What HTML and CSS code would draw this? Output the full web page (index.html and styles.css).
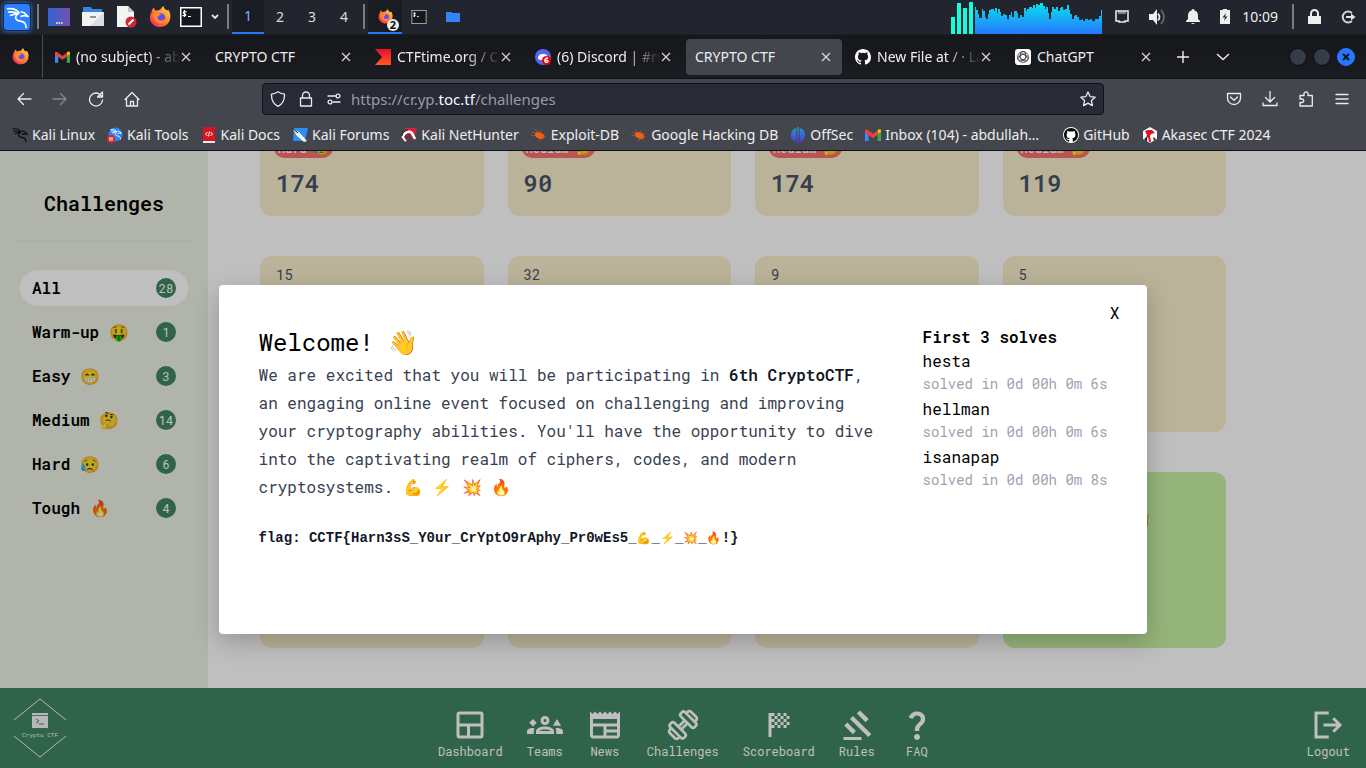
FILE: index.html
```html
<!DOCTYPE html>
<html lang="en">
<head>
<meta charset="utf-8">
<meta name="viewport" content="width=device-width, initial-scale=1">
<title>CRYPTO CTF</title>
<link rel="stylesheet" href="styles.css">
</head>
<body>
<svg class="defs" aria-hidden="true">
  <defs>
    <linearGradient id="ff-g" x1="1" y1="0" x2="0" y2="1"><stop offset="0" stop-color="#ffe14a"/><stop offset=".45" stop-color="#ff8a2a"/><stop offset=".8" stop-color="#ff3b4e"/><stop offset="1" stop-color="#d81b78"/></linearGradient>
    <linearGradient id="desk-g" x1="0" y1="0" x2="1" y2="0"><stop offset="0" stop-color="#3465d0"/><stop offset="1" stop-color="#7350b0"/></linearGradient>
    <linearGradient id="cpu-g" x1="0" y1="0" x2="0" y2="1"><stop offset="0" stop-color="#07e3ec"/><stop offset="1" stop-color="#2777ff"/></linearGradient>
    <linearGradient id="ctf-g" x1="0" y1="0" x2="0" y2="1"><stop offset="0" stop-color="#e8102c"/><stop offset="1" stop-color="#ff5a26"/></linearGradient>
    <linearGradient id="off-g" x1="0" y1="0" x2="0" y2="1"><stop offset="0" stop-color="#18a0c4"/><stop offset="1" stop-color="#5b2fe0"/></linearGradient>
    <symbol id="dragon" viewBox="0 0 24 24"><path d="M1 3c6-1 11 1 13 5M2 6.500c4-1 8 0 11 1.500M4 10c3-1 6-2 10-2M13 8c-6 4-2 7.500 3 8 4 .5 5 3 5 7M15 6l4 1 4 4-4-1-4 1" fill="none" stroke="currentColor" stroke-width="1.700" stroke-linejoin="round"/></symbol>
    <symbol id="firefox" viewBox="0 0 24 24"><path d="M3 6c0-1 1-3 2-4l2 3c2 0 4-1 5-1 1 0 1-2 4-4 0 3 2 4 4 5l1-1c2 3 3 6 2 10-1 6-6 9-11 9S1 19 1 13c0-3 1-5 2-7z" fill="url(#ff-g)"/><circle cx="12.500" cy="13" r="5.200" fill="#6a4de8"/><path d="M4 9c3-2 6-2 9 0l-3 2c-2 2 0 5 3 5 2 0 4-1 5-3 0 4-3 6-6 6-5 0-8-5-8-10z" fill="#ff8c2e"/></symbol>
    <symbol id="term" viewBox="0 0 22 20"><rect x=".75" y=".75" width="20.500" height="18.500" fill="#16171a" stroke="currentColor" stroke-width="1.500"/><path d="M6.500 5c-3-1.500-4 1-2 1.700 2.500 1 1 3-2 1.600M4.500 3v7M8 9.500h3" fill="none" stroke="#fff" stroke-width="1.200"/></symbol>
    <symbol id="folder" viewBox="0 0 16 12"><path d="M1 1h5l1.500 1H15v9H1z" fill="#3584f5"/></symbol>
    <symbol id="gmail" viewBox="0 0 16 12"><path d="M0 2v10h3.500V5z" fill="#4285f4"/><path d="M16 2v10h-3.500V5z" fill="#34a853"/><path d="M12.500 1.500V5L16 3V1.500c0-1.500-2-2-3.500 0z" fill="#fbbc04"/><path d="M0 1.500V3l3.500 3L8 9l4.500-3V1.500L8 5 3.500 1.500C2 0 0 .2 0 1.500z" fill="#ea4335"/></symbol>
    <symbol id="github" viewBox="0 0 16 16"><path fill="currentColor" d="M8 0C3.580 0 0 3.580 0 8c0 3.540 2.290 6.530 5.470 7.590.4.070.55-.17.55-.38 0-.19-.01-.82-.01-1.490-2.010.37-2.530-.49-2.690-.94-.09-.23-.48-.94-.82-1.130-.28-.15-.68-.52-.01-.53.63-.01 1.080.58 1.230.82.72 1.210 1.870.87 2.330.66.07-.52.28-.87.51-1.070-1.780-.2-3.640-.89-3.640-3.950 0-.87.31-1.590.82-2.150-.08-.2-.36-1.020.08-2.120 0 0 .67-.21 2.200.82a7.600 7.600 0 0 1 4 0c1.530-1.040 2.200-.82 2.200-.82.44 1.100.16 1.920.08 2.120.51.56.82 1.270.82 2.150 0 3.070-1.870 3.750-3.650 3.950.29.25.54.73.54 1.480 0 1.070-.01 1.930-.01 2.200 0 .21.15.46.55.38A8 8 0 0 0 16 8c0-4.420-3.580-8-8-8z"/></symbol>
    <symbol id="close" viewBox="0 0 10 10"><path d="M1 1l8 8M9 1L1 9" fill="none" stroke="#d8d8dc" stroke-width="1.200"/></symbol>
    <symbol id="bug" viewBox="0 0 16 12"><ellipse cx="8.500" cy="6.500" rx="4.800" ry="3" transform="rotate(25 8.500 6.500)" fill="#f06016"/><path d="M1 3l4 1M0 6l5 1M4 0l3 4M8 12l1-3M12 11l-1-3M15 8l-4-1M14 5l-4 0M9 1l1 4" stroke="#c9561f" stroke-width=".7"/></symbol>
  </defs>
</svg>

<header class="panel">
  <svg class="kali-logo" viewBox="0 0 28 28"><rect x="1" y="1" width="26" height="26" rx="3" fill="#2a7fff"/><use class="white" href="#dragon" x="3" y="3" width="23" height="23"/></svg>
  <i class="sep sep-first"></i>
  <div class="launchers">
    <svg width="22" height="18" viewBox="0 0 22 18"><rect width="22" height="18" fill="url(#desk-g)"/><path d="M8 15h1.500M10.500 15H12M13 15h1.500" stroke="#fff" stroke-width="1.500"/></svg>
    <svg width="22" height="20" viewBox="0 0 22 20"><path d="M1 0h8l1 2h10v4H1z" fill="#3584e4"/><path d="M0 5h22v14H0z" fill="#f2f2f4"/><path d="M8 19L22 5v14z" fill="#dcdce0"/><path d="M8 10h6" stroke="#777" stroke-width="1.500"/></svg>
    <svg width="21" height="22" viewBox="0 0 21 22"><path d="M1 0h11l6 6v15H1z" fill="#f4f4f4"/><path d="M12 0l6 6h-6z" fill="#c4c4c4"/><circle cx="15" cy="16" r="5.500" fill="#d4262f"/><path d="M12.500 18.500l5-5" stroke="#fff" stroke-width="2"/></svg>
    <svg width="22" height="22"><use href="#firefox"/></svg>
    <svg class="white" width="22" height="20"><use href="#term"/></svg>
    <svg width="8" height="6" viewBox="0 0 8 6"><path d="M1 1l3 3 3-3" fill="none" stroke="#e6e6e6" stroke-width="1.800"/></svg>
  </div>
  <i class="sep"></i>
  <nav class="spaces" aria-label="Workspaces">
    <button class="space on" type="button">1</button><button class="space" type="button">2</button><button class="space" type="button">3</button><button class="space" type="button">4</button>
  </nav>
  <i class="sep"></i>
  <div class="tasks">
    <button class="task on" type="button" aria-label="Firefox"><svg width="15" height="15"><use href="#firefox"/></svg><b class="count">2</b></button>
    <button class="task" type="button" aria-label="Terminal"><svg class="grey" width="16" height="14"><use href="#term"/></svg></button>
    <button class="task" type="button" aria-label="Files"><svg width="16" height="12"><use href="#folder"/></svg></button>
  </div>
  <div class="tray">
    <svg class="cpu" width="152" height="34" viewBox="0 0 152 34"><path d="M0 17h4v17H0zM6 3h4v31H6zM12 8h4v26h-4zM18 2h4v32h-4z" fill="#12ffdd"/><path fill="url(#cpu-g)" d="M24 34V7h1v3h2v4h1v4h3v-9h1v2h2v6h1v2h2v-5h1v-4h2v-1h3v2h1v-3h2v5h1v-4h2v3h1v4h2v-2h2v1h2v4h2v-4h2v-3h1v5h2v-6h3v2h1v5h2v-3h2v2h2v-9h2v3h1v-2h2v-2h3v1h1v-3h2v3h1v-4h2v1h2v-2h3v3h2v3h1v-2h2v6h1v6h2v-7h1v-5h2v2h2v-2h2v4h2v-3h1v-1h2v3h2v-1h2v-4h2v5h1v4h2v5h2v-3h1v-1h2v2h2v3h3v-1h1v2h2v-2h3v1h2v-1h2v2h3v-2h4v-3h2V10h1v24z"/></svg>
    <svg width="14" height="13" viewBox="0 0 14 13"><path d="M1 1h12v10h-3v1H4v-1H1z" fill="none" stroke="#e8e8e8" stroke-width="1.600"/><path d="M4 1v3M6 1v3M8 1v3M10 1v3" stroke="#e8e8e8"/></svg>
    <svg width="17" height="16" viewBox="0 0 17 16"><path d="M0 5h4l4-5v16l-4-5H0z" fill="#eee"/><path d="M9 4.500q3 3.500 0 7" fill="none" stroke="#eee" stroke-width="1.700"/><path d="M12 1q6 7 0 14" fill="none" stroke="#666973" stroke-width="1.700"/></svg>
    <svg width="14" height="15" viewBox="0 0 14 15"><path d="M7 0c1 0 1.500 1 1.500 1.500C11 2 12 4 12 7v3l2 2v1H0v-1l2-2V7c0-3 1-5 3.500-5.500C5.500 1 6 0 7 0zM5 14h4q-2 2-4 0z" fill="#eee"/></svg>
    <svg width="10" height="15" viewBox="0 0 10 15"><path d="M3 0h4v1h3v14H0V1h3z" fill="#eee"/><path d="M6 4L2.500 8.500H5L4 12l3.500-4.500H5z" fill="#23252e"/></svg>
    <time class="clock">10:09</time>
    <i class="sep"></i>
    <svg width="13" height="15" viewBox="0 0 13 15"><path d="M3 7V4.500a3.500 3.500 0 0 1 7 0V7" fill="none" stroke="#eee" stroke-width="2"/><path d="M0 7h13v8H0z" fill="#eee"/></svg>
    <svg width="15" height="14" viewBox="0 0 15 14"><path d="M11 3A5.500 5.500 0 1 0 11 11" fill="none" stroke="#d4d4d4" stroke-width="2"/><path d="M5 7h7" stroke="#e4e4e4" stroke-width="2"/><path d="M10 3.500L14.500 7 10 10.500z" fill="#e4e4e4"/></svg>
  </div>
</header>

<div class="tabbar">
  <svg class="ff-home" width="17" height="17"><use href="#firefox"/></svg>
  <div class="tabs">
    <div class="tab"><svg width="15" height="12"><use href="#gmail"/></svg><span class="tab-title long">(no subject) - ab</span><button class="x" type="button" aria-label="Close tab"><svg width="10" height="10"><use href="#close"/></svg></button></div>
    <div class="tab"><span class="tab-title">CRYPTO CTF</span><button class="x" type="button" aria-label="Close tab"><svg width="10" height="10"><use href="#close"/></svg></button></div>
    <div class="tab"><svg width="16" height="16" viewBox="0 0 16 16"><path d="M0 0h16v16H0l7-8z" fill="url(#ctf-g)"/></svg><span class="tab-title long">CTFtime.org / C</span><button class="x" type="button" aria-label="Close tab"><svg width="10" height="10"><use href="#close"/></svg></button></div>
    <div class="tab"><svg width="16" height="16" viewBox="0 0 16 16"><circle cx="8" cy="8" r="8" fill="#5865f2"/><path d="M3 10c0-4 2-5 5-5s5 1 5 5l-3 1H6z" fill="#fff"/><circle cx="11.500" cy="11.500" r="4.500" fill="#e8000b"/><path d="M13 9c-3 0-3.500 2-3 3.500s3 1 3-.3-2-1.300-2.800-.2" fill="none" stroke="#fff" stroke-width="1.300"/></svg><span class="tab-title long">(6) Discord | #ru</span><button class="x" type="button" aria-label="Close tab"><svg width="10" height="10"><use href="#close"/></svg></button></div>
    <div class="tab active"><span class="tab-title">CRYPTO CTF</span><button class="x" type="button" aria-label="Close tab"><svg width="10" height="10"><use href="#close"/></svg></button></div>
    <div class="tab"><svg class="white" width="16" height="16"><use href="#github"/></svg><span class="tab-title long">New File at / · La</span><button class="x" type="button" aria-label="Close tab"><svg width="10" height="10"><use href="#close"/></svg></button></div>
    <div class="tab"><svg width="16" height="16" viewBox="0 0 16 16"><rect width="16" height="16" rx="3" fill="#fff"/><g fill="none" stroke="#333" stroke-width=".8"><rect x="5.400" y="2.400" width="5.200" height="9" rx="2.600"/><rect x="5.400" y="2.400" width="5.200" height="9" rx="2.600" transform="rotate(120 8 8)"/><rect x="5.400" y="2.400" width="5.200" height="9" rx="2.600" transform="rotate(240 8 8)"/><circle cx="8" cy="8" r="5.400"/></g></svg><span class="tab-title">ChatGPT</span><button class="x" type="button" aria-label="Close tab"><svg width="10" height="10"><use href="#close"/></svg></button></div>
  </div>
  <button class="tool" type="button" aria-label="New tab"><svg width="12" height="12" viewBox="0 0 12 12"><path d="M6 0v12M0 6h12" stroke="#eee" stroke-width="1.400"/></svg></button>
  <button class="tool" type="button" aria-label="List all tabs"><svg width="14" height="8" viewBox="0 0 14 8"><path d="M1 1l6 5.500L13 1" fill="none" stroke="#eee" stroke-width="1.400"/></svg></button>
  <div class="wm">
    <button type="button" aria-label="Minimize"></button><button type="button" aria-label="Maximize"></button><button class="wm-close" type="button" aria-label="Close"><svg width="8" height="8" viewBox="0 0 8 8"><path d="M1 1l6 6M7 1L1 7" stroke="#10131a" stroke-width="2"/></svg></button>
  </div>
</div>

<div class="toolbar">
  <div class="nav-buttons">
    <button type="button" aria-label="Back"><svg viewBox="0 0 16 16"><path d="M15 8H2M7.500 2.500L2 8l5.500 5.500"/></svg></button>
    <button type="button" aria-label="Forward" disabled><svg viewBox="0 0 16 16"><path d="M1 8h13M8.500 2.500L14 8l-5.500 5.500"/></svg></button>
    <button type="button" aria-label="Reload"><svg viewBox="0 0 16 16"><path d="M13.500 5A6.500 6.500 0 1 0 14.500 9M14.500 1v5h-5z"/></svg></button>
    <button type="button" aria-label="Home"><svg viewBox="0 0 16 16"><path d="M1 8.500L8 1.500l7 7M2.500 7.500V15h11V7.500M6.500 15v-4.500h3V15"/></svg></button>
  </div>
  <div class="urlbar">
    <svg viewBox="0 0 16 16"><path d="M8 .8c2 1.500 4 2 6.500 2.300C14.700 8 13 13 8 15.300 3 13 1.300 8 1.500 3.100 4 2.800 6 2.300 8 .8z"/></svg>
    <svg viewBox="0 0 16 16"><path d="M4.500 7V4.500a3.500 3.500 0 0 1 7 0V7M2.500 7h11v8h-11z"/></svg>
    <svg viewBox="0 0 16 16"><path d="M2 5h7.500M7 11h7"/><circle cx="12" cy="5" r="1.900"/><circle cx="4" cy="11" r="1.900"/></svg>
    <span class="url">https://cr.yp.<b>toc.tf</b>/challenges</span>
    <button type="button" aria-label="Bookmark this page"><svg viewBox="0 0 16 16"><path d="M8 1l2.100 4.600 5 .6-3.700 3.400 1 5L8 12.100l-4.400 2.500 1-5L.9 6.200l5-.6z"/></svg></button>
  </div>
  <div class="actions">
    <button type="button" aria-label="Pocket"><svg viewBox="0 0 16 16"><path d="M1.500 2.500h13V7a6.500 6.500 0 0 1-13 0zM4.500 6L8 9.200 11.500 6"/></svg></button>
    <button type="button" aria-label="Downloads"><svg viewBox="0 0 16 16"><path d="M8 0v11M3.500 6.500L8 11l4.500-4.500M1 12v2.500h14V12"/></svg></button>
    <button type="button" aria-label="Extensions"><svg viewBox="0 0 16 16"><path d="M2 4.500h4V2.800a2 2 0 0 1 4 0v1.700h4.300V15H2v-3.500h2a1.700 1.700 0 0 0 0-3.500H2z"/></svg></button>
    <button type="button" aria-label="Menu"><svg viewBox="0 0 16 16"><path d="M2 3.500h12M2 8h12M2 12.500h12"/></svg></button>
  </div>
</div>

<nav class="bookmarks" aria-label="Bookmarks">
  <a href="#"><svg class="black"><use href="#dragon"/></svg>Kali Linux</a>
  <a href="#"><svg viewBox="0 0 16 16"><circle cx="8.500" cy="7.500" r="7" fill="#2b83f0"/><use class="white" href="#dragon" x="3" y="1" width="12" height="12"/><circle cx="4" cy="12" r="4" fill="#d9262e"/><path d="M2 11h4M3 11v3M5 11v3" stroke="#fff" stroke-width=".9"/></svg>Kali Tools</a>
  <a href="#"><svg viewBox="0 0 16 16"><path d="M2 0h12v14H2z" fill="#d9141e"/><path d="M2 14h12v2H2z" fill="#eee"/><path d="M6.500 5l-2 2 2 2M9.500 5l2 2-2 2M8.500 4.500l-1 5" fill="none" stroke="#fff"/></svg>Kali Docs</a>
  <a href="#"><svg viewBox="0 0 16 16"><path d="M2 1h14l-3 13H1z" fill="#2b8ff5"/><path d="M0 1l7 4 8 9-3 1-7-6z" fill="#f4f4f4"/><path d="M0 1l6 5" stroke="#111"/></svg>Kali Forums</a>
  <a href="#"><svg viewBox="0 0 16 16"><path d="M3 1h13l-3 10z" fill="#d8203a"/><path d="M5 14L2 10c2-6 8-7 10-2l2 4" fill="none" stroke="#fff" stroke-width="2.600"/><path d="M6 13l-2-3c2-4 4-3 6 0l2 3" fill="none" stroke="#b0182e" stroke-width="1.600"/><path d="M1 9c0-3 3-6 6-6" fill="none" stroke="#222"/></svg>Kali NetHunter</a>
  <a href="#"><svg><use href="#bug"/></svg>Exploit-DB</a>
  <a href="#"><svg><use href="#bug"/></svg>Google Hacking DB</a>
  <a href="#"><svg viewBox="0 0 16 16"><path d="M6.300 1v14C-1 13-1 3 6.300 1zM9.700 1v14C17 13 17 3 9.700 1zM7.200 0h1.600v16H7.200z" fill="url(#off-g)"/></svg>OffSec</a>
  <a href="#"><svg><use href="#gmail"/></svg>Inbox (104) - abdullah…</a>
  <a class="spaced" href="#"><svg viewBox="0 0 16 16"><circle cx="8" cy="8" r="8" fill="#fff"/><svg class="black" x="1" y="1" width="14" height="14"><use href="#github"/></svg></svg>GitHub</a>
  <a href="#"><svg viewBox="0 0 16 16"><path d="M8 0l7 4v8l-7 4-7-4V4z" fill="#f7f7f7"/><path d="M3 4l3-1h4l3 3-4 1-1 2 1 6H7l-1-5-3 3 2-5z" fill="#d8102c"/><path d="M2 12l3-2v5zM11 10l3 2-2 2z" fill="#222"/></svg>Akasec CTF 2024</a>
</nav>

<div class="app">
  <div class="content">
    <aside class="sidebar">
      <h2>Challenges</h2>
      <ul class="filters">
        <li><button class="filter on" type="button">All <span>28</span></button></li>
        <li><button class="filter" type="button">Warm-up 🤑 <span>1</span></button></li>
        <li><button class="filter" type="button">Easy 😁 <span>3</span></button></li>
        <li><button class="filter" type="button">Medium 🤔 <span>14</span></button></li>
        <li><button class="filter" type="button">Hard 😥 <span>6</span></button></li>
        <li><button class="filter" type="button">Tough 🔥 <span>4</span></button></li>
      </ul>
    </aside>
    <main class="board">
      <div class="cards">
        <article class="card"><span class="level">Hard 😥</span><strong>174</strong></article>
        <article class="card"><span class="level">Medium 🤔</span><strong>90</strong></article>
        <article class="card"><span class="level">Medium 🤔</span><strong>174</strong></article>
        <article class="card"><span class="level">Medium 🤔</span><strong>119</strong></article>
        <article class="card"><span class="solves">15</span></article>
        <article class="card"><span class="solves">32</span></article>
        <article class="card"><span class="solves">9</span></article>
        <article class="card"><span class="solves">5</span></article>
        <article class="card"></article>
        <article class="card"></article>
        <article class="card"></article>
        <article class="card solved"><h3>Welcome! 👋</h3></article>
      </div>
    </main>
  </div>

  <footer class="dock">
    <a class="brand" href="#" aria-label="Crypto CTF"><svg width="52" height="60" viewBox="0 0 52 60"><path d="M0 22L26 1l26 21M0 38l26 21 26-21" fill="none" stroke="#f4f4f4"/><path d="M18 15h16v15H18z" fill="#f4f4f4"/><path d="M18 17.500h16" stroke="#5f9a7d"/><path d="M22 21l3 2-3 2M25 26h5" fill="none" stroke="#3f8663"/><text x="26" y="39" text-anchor="middle">Crypto CTF</text></svg></a>
    <nav class="dock-nav">
      <a href="#"><svg viewBox="0 0 24 24"><g fill="none" stroke="currentColor" stroke-width="2"><rect x="4" y="4" width="16" height="16" rx="1"/><path d="M4 12h16M11 12v8"/></g></svg>Dashboard</a>
      <a href="#"><svg viewBox="0 0 24 24"><path fill="currentColor" d="M4 8l2.500 2.500L4 13l-2.500-2.500zM20 8l2.700 4.500h-5.400zM0 18v-1.600C0 14.500 2 14 4 14l1 .1C4.500 15 4.500 16 4.500 18zM24 18v-1.600c0-1.900-2-2.400-4-2.400l-1 .1c.5.900.5 1.900.5 3.900zM12 6a3 3 0 1 1 0 6 3 3 0 0 1 0-6zm0 2a1 1 0 1 0 0 2 1 1 0 0 0 0-2zM6 18v-1.600c0-2.300 3-3.400 6-3.400s6 1.100 6 3.400V18zm2.200-2h7.600c-.8-.7-2-1-3.800-1s-3 .3-3.800 1z"/></svg>Teams</a>
      <a href="#"><svg viewBox="0 0 24 24"><path fill="currentColor" d="M22 3l-1.670 1.670L18.670 3 17 4.670 15.330 3l-1.660 1.670L12 3l-1.670 1.670L8.670 3 7 4.670 5.330 3 3.670 4.670 2 3v16c0 1.100.9 2 2 2h16c1.100 0 2-.9 2-2V3zM11 19H4v-6h7v6zm9 0h-7v-2h7v2zm0-4h-7v-2h7v2zm0-4H4V8h16v3z"/></svg>News</a>
      <a href="#"><svg viewBox="0 0 24 24"><g transform="rotate(-45 12 12)" fill="none" stroke="currentColor" stroke-width="1.800"><path d="M9 10.700h6M9 13.300h6"/><rect x="5" y="5.500" width="4" height="13" rx="1.600"/><rect x="15" y="5.500" width="4" height="13" rx="1.600"/><path d="M5 8H3.600A1.500 1.500 0 0 0 2 9.500v5A1.500 1.500 0 0 0 3.600 16H5M19 8h1.400A1.500 1.500 0 0 1 22 9.500v5a1.500 1.500 0 0 1-1.600 1.500H19"/></g></svg>Challenges</a>
      <a href="#"><svg viewBox="0 0 24 24"><path fill="currentColor" d="M5 4h2v16H5zM7 4h2v2H7zM11 4h2v2h-2zM15 4h2v2h-2zM9 6h2v2H9zM13 6h2v2h-2zM17 6h2v2h-2zM7 8h2v2H7zM11 8h2v2h-2zM15 8h2v2h-2zM9 10h2v2H9zM13 10h2v2h-2zM17 10h2v2h-2zM7 12h2v2H7zM11 12h2v2h-2zM15 12h2v2h-2z"/></svg>Scoreboard</a>
      <a href="#"><svg viewBox="0 0 24 24"><path fill="currentColor" d="M3 20h12v2H3zM7.300 8l2-2L21.500 18l-2 2zM11.900 4.400L14 2.300 19.800 8l-2.100 2.100zM3.500 12.400l2.100-2.100 5.700 5.700-2.100 2.100z"/></svg>Rules</a>
      <a href="#"><svg viewBox="0 0 24 24"><path fill="currentColor" d="M11.070 12.850c.77-1.390 2.250-2.210 3.110-3.440.91-1.290.4-3.700-2.180-3.700-1.690 0-2.520 1.280-2.870 2.340L6.540 6.960C7.250 4.830 9.180 3 11.990 3c2.350 0 3.960 1.070 4.780 2.410.7 1.150 1.110 3.300.03 4.900-1.200 1.770-2.350 2.310-2.970 3.450-.25.46-.35.76-.35 2.240h-2.890c-.01-.78-.13-2.050.48-3.150zM14 20c0 1.100-.9 2-2 2s-2-.9-2-2 .9-2 2-2 2 .9 2 2z"/></svg>FAQ</a>
    </nav>
    <a class="logout" href="#"><svg viewBox="0 0 24 24"><path d="M12.500 4H4v16h8.500M9 12h10.500M15.500 7.500L20 12l-4.500 4.500" fill="none" stroke="currentColor" stroke-width="2"/></svg>Logout</a>
  </footer>
</div>

<div class="backdrop">
  <dialog class="modal" open aria-labelledby="modal-title">
    <button class="modal-close" type="button" aria-label="Close">X</button>
    <section class="intro">
      <h1 id="modal-title">Welcome! 👋</h1>
      <p>We are excited that you will be participating in <b>6th CryptoCTF</b>, an engaging online event focused on challenging and improving your cryptography abilities. You'll have the opportunity to dive into the captivating realm of ciphers, codes, and modern cryptosystems. 💪 <span class="emoji">⚡</span> 💥 🔥</p>
      <code>flag: CCTF{Harn3sS_Y0ur_CrYptO9rAphy_Pr0wEs5_<span class="emoji">💪</span>_<span class="emoji">⚡</span>_<span class="emoji">💥</span>_<span class="emoji">🔥</span>!}</code>
    </section>
    <section class="first">
      <h2>First 3 solves</h2>
      <ol>
        <li>hesta<small>solved in 0d 00h 0m 6s</small></li>
        <li>hellman<small>solved in 0d 00h 0m 6s</small></li>
        <li>isanapap<small>solved in 0d 00h 0m 8s</small></li>
      </ol>
    </section>
  </dialog>
</div>
</body>
</html>
```
FILE: styles.css
```css
*, *::before, *::after { box-sizing: border-box; }
html, body { height: 100%; }
body {
  margin: 0;
  display: flex;
  flex-direction: column;
  overflow: hidden;
  font: 14px/20px "Noto Sans", sans-serif;
  color: #eeeeef;
  background: #44464e;
}
button { border: 0; padding: 0; background: none; color: inherit; font: inherit; cursor: pointer; }
a { color: inherit; text-decoration: none; }
h1, h2, h3, p, ul, ol { margin: 0; padding: 0; list-style: none; }
svg { flex: none; display: block; }
.defs { position: absolute; width: 0; height: 0; }
.white { color: #fff; }
.black { color: #0a0a0a; }
.grey { color: #9a9a9a; }
.emoji { font-family: "Noto Color Emoji", sans-serif; }

/* Desktop panel */
.panel {
  flex: none;
  height: 35px;
  padding: 0 10px 1px 3px;
  display: flex;
  align-items: center;
  background: #23252e;
  border-bottom: 1px solid #1c1e22;
}
.kali-logo { width: 28px; height: 28px; box-shadow: 0 0 4px #2a7fff; border-radius: 4px; }
.sep { flex: none; width: 2px; height: 25px; background: #7b7c80; }
.sep-first { margin: 0 9px 0 6px; }
.launchers { display: flex; align-items: center; gap: 12px; margin-right: 8px; }
.launchers svg:nth-child(n + 5) { margin-left: -3px; }
.spaces { display: flex; margin: 0 3px; align-self: stretch; }
.space { width: 32px; height: 34px; font-size: 14px; color: #dcdcdc; }
.space.on { background: #1a1c24; color: #7fb2f5; border-bottom: 2px solid #2777ff; }
.tasks { display: flex; align-self: stretch; margin-left: 3px; }
.task { position: relative; width: 34px; height: 34px; display: grid; place-items: center; }
.task.on { background: #1a1c24; border-bottom: 2px solid #2777ff; }
.count {
  position: absolute;
  right: 3px;
  bottom: 1px;
  width: 12px;
  height: 12px;
  border-radius: 6px;
  background: #eee;
  color: #111;
  font-size: 11px;
  line-height: 12px;
}
.tray { display: flex; align-items: center; gap: 20px; margin-left: auto; align-self: stretch; }
.cpu { margin-right: -8px; }
.clock { font-size: 14px; margin: 0 -12px 0 -8px; }
.clock + .sep { margin: 0 -6px 0 6px; }

/* Browser tabs */
.tabbar {
  flex: none;
  height: 44px;
  display: flex;
  align-items: center;
  padding-right: 11px;
  background: linear-gradient(#16171b, #1b1c21);
  border-bottom: 1px solid #101114;
}
.ff-home { margin: 0 13px 0 12px; }
.tabs { flex: 0 1 1121px; min-width: 0; display: flex; gap: 4px; padding-left: 3px; border-left: 1px solid #4b4c50; align-self: stretch; align-items: center; }
.tab {
  flex: none;
  width: 156px;
  height: 36px;
  padding: 0 11px 0 9px;
  display: flex;
  align-items: center;
  gap: 6px;
  border-radius: 4px;
}
.tab.active { background: #44464e; }
.tab-title { flex: 1; min-width: 0; white-space: nowrap; line-height: 22px; }
.tab-title.long { mask-image: linear-gradient(to left, transparent, #000 36px); }
.x { margin-left: -6px; }
.tool { width: 40px; height: 36px; display: grid; place-items: center; }
.wm { display: flex; gap: 6px; margin-left: auto; }
.wm button { width: 18px; height: 18px; border-radius: 50%; background: #363b48; border: 1px solid #0c0d10; display: grid; place-items: center; }
.wm .wm-close { background: #2777ff; border-color: #2777ff; }

/* Address bar */
.toolbar { flex: none; height: 40px; display: flex; align-items: center; justify-content: space-between; padding: 0 16px; }
.toolbar svg { width: 16px; height: 16px; fill: none; stroke: #ececee; stroke-width: 1.3; stroke-linejoin: round; stroke-linecap: round; }
.nav-buttons, .actions { flex: 1 1 0; display: flex; gap: 20px; }
.actions { justify-content: flex-end; }
.nav-buttons button:disabled { opacity: .4; }
.urlbar {
  flex: 0 1 842px;
  height: 32px;
  padding: 0 7px;
  display: flex;
  align-items: center;
  gap: 12px;
  border: 1px solid #101116;
  border-radius: 4px;
  background: #282a36;
}
.url { flex: 1; margin-left: -3px; font-size: 15px; color: #9a9ba3; }
.url b { font-weight: 400; color: #fbfbfe; }

/* Bookmarks */
.bookmarks {
  flex: none;
  height: 32px;
  display: flex;
  align-items: center;
  gap: 12px;
  padding: 0 12px;
  white-space: nowrap;
  border-bottom: 1px solid #101114;
}
.bookmarks a { display: flex; align-items: center; gap: 4px; }
.bookmarks a > svg { width: 16px; height: 16px; }
.bookmarks .spaced { margin-left: 12px; }

/* Challenge board */
.app {
  flex: 1;
  min-height: 0;
  display: flex;
  flex-direction: column;
  background: #fff;
  color: #000;
  font-family: "Roboto Mono", "Liberation Mono", monospace;
}
.content { flex: 1; min-height: 0; display: flex; }
.sidebar { flex: none; width: 208px; padding: 38px 16px; background: #ecf0e3; }
.sidebar h2 { font-size: 20px; font-weight: 600; line-height: 28px; text-align: center; padding-bottom: 23px; border-bottom: 2px solid #e5e7eb; }
.filters { display: grid; gap: 8px; padding: 28px 4px; }
.filter {
  width: 100%;
  height: 36px;
  padding: 0 12px;
  display: flex;
  align-items: center;
  justify-content: space-between;
  border-radius: 18px;
  font-size: 16px;
  font-weight: 600;
}
.filter.on { background: #fff; }
.filter span { width: 20px; height: 20px; border-radius: 50%; background: #3f8663; color: #fff; font-size: 12px; font-weight: 400; line-height: 20px; }

.board { flex: 1; min-width: 0; overflow: hidden; display: flex; flex-direction: column; justify-content: flex-end; padding: 0 140px 40px 52px; }
.cards { display: grid; grid-template-columns: repeat(4, 1fr); gap: 40px 24px; }
.card { height: 176px; padding: 8px 16px 17px; border-radius: 12px; background: #f9efcd; color: #475569; display: flex; flex-direction: column; align-items: flex-start; }
.card.solved { background: #c7f0a3; }
.card h3 { margin-top: 24px; font-size: 20px; line-height: 28px; }
.card strong { font-size: 24px; font-weight: 600; line-height: 32px; }
.solves { line-height: 22px; }
.level { margin: auto 0 9px -2px; padding: 2px 4px; border-radius: 10px; background: #fc7070; color: #fff; font-size: 12px; font-weight: 600; line-height: 16px; }

/* Bottom dock */
.dock { flex: none; height: 80px; padding: 10px 16px 8px 14px; display: flex; justify-content: space-between; background: #3f8663; color: #fff; font-size: 12px; line-height: 16px; }
.brand text { font: 6px "Liberation Mono", monospace; fill: #f4f4f4; }
.dock-nav { display: flex; gap: 24px; }
.dock-nav a, .logout { display: flex; flex-direction: column; align-items: center; padding-top: 9px; }
.dock-nav svg, .logout svg { width: 36px; height: 36px; }

/* Welcome dialog */
.backdrop { position: absolute; inset: 151px 0 0; display: grid; place-items: center; background: rgb(0 0 0 / .25); font-family: "Roboto Mono", "Liberation Mono", monospace; font-size: 16px; line-height: 24px; }
.modal {
  position: relative;
  inset: auto;
  width: 68%;
  min-height: 349px;
  margin: 0;
  padding: 40px;
  border: 0;
  border-radius: 4px;
  display: flex;
  gap: 40px;
  background: #fff;
  color: #000;
  box-shadow: 0 8px 24px rgb(0 0 0 / .22);
}
.modal-close { position: absolute; top: 16px; right: 28px; }
.intro { flex: 1; min-width: 0; }
.intro h1 { font-size: 24px; font-weight: 400; line-height: 34px; }
.intro p { margin: 2px 0 22px; line-height: 28px; color: #374151; }
.intro p b { font-weight: 600; color: #111827; }
.intro code { font: 700 14px/22px "Liberation Mono", monospace; color: #111827; }
.intro code .emoji { font-size: 12px; }
.first { flex: none; }
.first h2 { font-size: 16px; font-weight: 600; }
.first small { display: block; padding-bottom: 2px; font-size: 14px; line-height: 22px; color: #9ca3af; }
```
